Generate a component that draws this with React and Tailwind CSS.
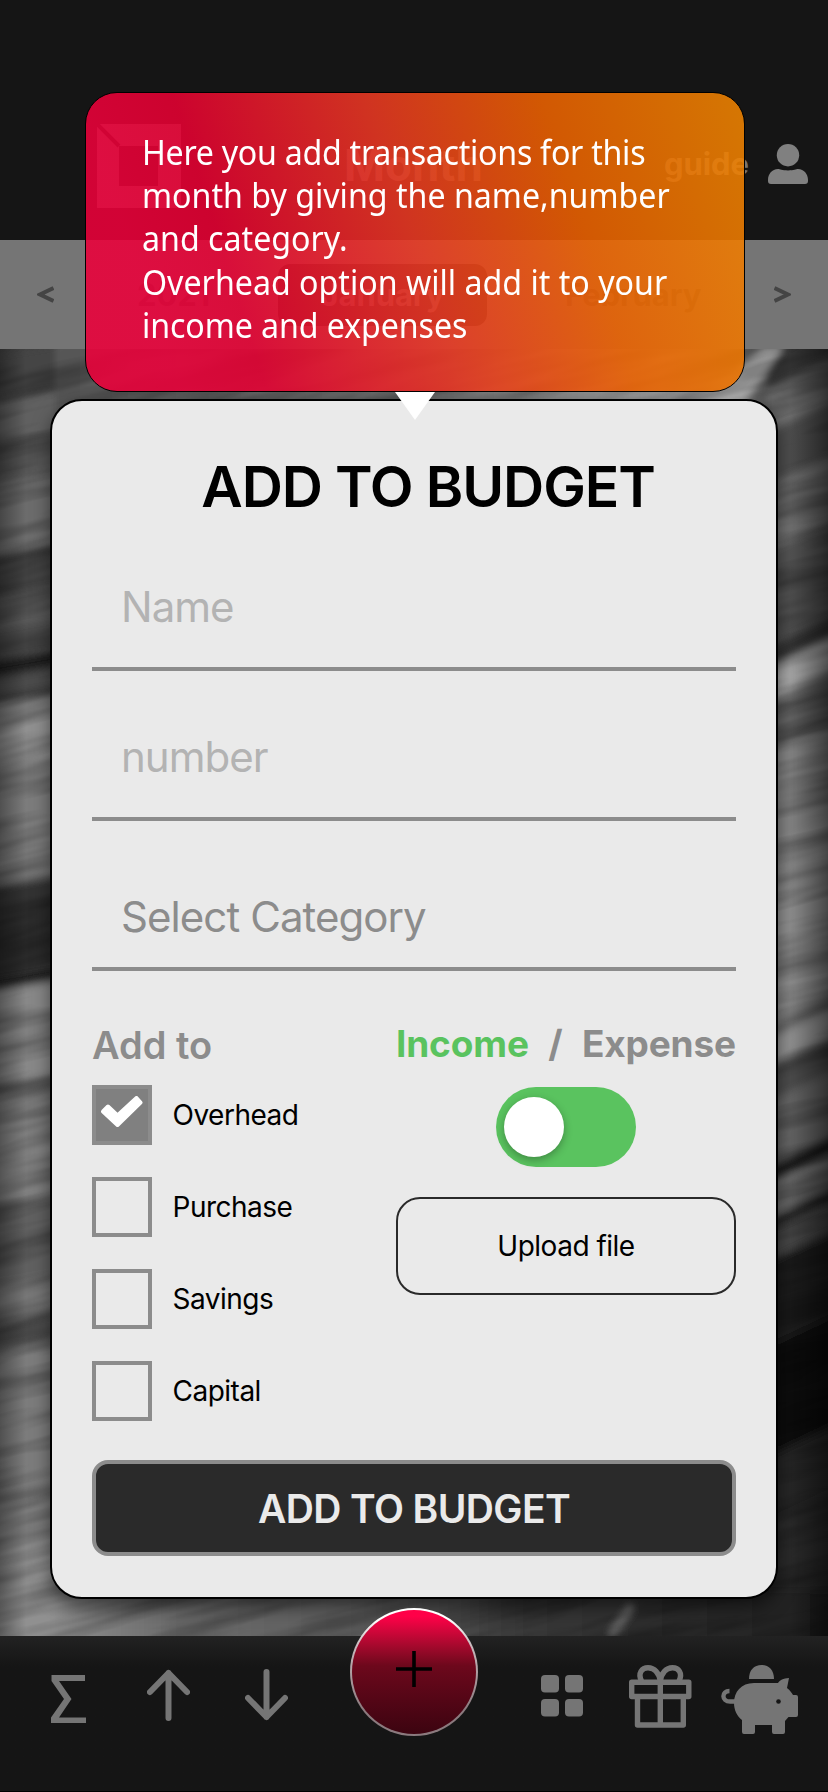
const LEFT_BANDS = [
  [349, 395, '#444'], [395, 440, '#606060'], [440, 475, '#545454'], [475, 550, '#6c6c6c'], [550, 590, '#444'],
  [590, 625, '#5a5a5a'], [625, 655, '#484848'], [655, 672, '#1e1e1e'], [672, 692, '#4c4c4c'], [692, 700, '#2a2a2a'],
  [700, 760, '#909090'], [760, 880, '#7c7c7c'], [880, 975, '#303030'], [975, 985, '#101010'], [985, 1080, '#888'],
  [1080, 1092, '#4c4c4c'], [1092, 1200, '#808080'], [1200, 1280, '#606060'], [1280, 1318, '#7a7a7a'],
  [1318, 1345, '#4c4c4c'], [1345, 1490, '#7c7c7c'], [1490, 1500, '#585858'], [1500, 1560, '#888'], [1560, 1650, '#909090'],
];

const RIGHT_BANDS = [
  [340, 372, '#3a3a3a'], [372, 415, '#707070'], [415, 470, '#4e4e4e'], [470, 535, '#707070'], [535, 630, '#525252'],
  [630, 652, '#303030'], [652, 684, '#aaa'], [684, 700, '#6c6c6c'], [700, 735, '#646464'], [735, 830, '#848484'],
  [830, 1010, '#8e8e8e'], [1010, 1022, '#606060'], [1022, 1050, '#909090'], [1050, 1085, '#4c4c4c'],
  [1085, 1150, '#646464'], [1150, 1168, '#1a1a1a'], [1168, 1202, '#747474'], [1202, 1214, '#121212'],
  [1214, 1245, '#444'], [1245, 1330, '#1e1e1e'], [1330, 1440, '#101010'], [1440, 1500, '#262626'], [1500, 1650, '#2a2a2a'],
];

function Backdrop() {
  return (
    <svg className="absolute inset-0" width="828" height="1792" viewBox="0 0 828 1792" aria-hidden="true">
      <defs>
        <filter id="soft" x="-20%" y="-5%" width="140%" height="110%"><feGaussianBlur stdDeviation="3 4" /></filter>
        <filter id="grain" x="0" y="0" width="100%" height="100%">
          <feTurbulence type="fractalNoise" baseFrequency="0.006 0.045" numOctaves="3" seed="8" />
          <feColorMatrix values="0 0 0 0 0  0 0 0 0 0  0 0 0 0 0  2.6 0 0 0 -1" />
        </filter>
        <linearGradient id="edgeL"><stop offset="0" stopOpacity=".35" /><stop offset="1" stopOpacity="0" /></linearGradient>
        <linearGradient id="edgeR"><stop offset="0" stopOpacity="0" /><stop offset="1" stopOpacity=".5" /></linearGradient>
        <linearGradient id="floor"><stop offset="0" stopColor="#909090" /><stop offset=".15" stopColor="#6c6c6c" /><stop offset=".4" stopColor="#5c5c5c" /><stop offset=".6" stopColor="#383838" /><stop offset="1" stopColor="#1c1c1c" /></linearGradient>
        <linearGradient id="ceiling"><stop offset="0" stopColor="#565656" /><stop offset=".5" stopColor="#6c6c6c" /><stop offset=".85" stopColor="#989898" /><stop offset="1" stopColor="#606060" /></linearGradient>
      </defs>
      <rect width="828" height="1792" fill="#444" />
      <g filter="url(#soft)">
        {LEFT_BANDS.map(([a, b, c]) => <path key={a} fill={c} d={`M-20 ${a + 8} L75 ${a - 8} V${b - 8} L-20 ${b + 8}Z`} />)}
        {RIGHT_BANDS.map(([a, b, c]) => <path key={a} fill={c} d={`M765 ${a + 18} L850 ${a - 22} V${b - 22} L765 ${b + 18}Z`} />)}
        <rect x="55" y="340" width="712" height="80" fill="url(#ceiling)" />
        <rect x="50" y="1590" width="800" height="60" fill="url(#floor)" />
        <path d="M670 412 L735 372 L765 345 L785 345 L740 410Z" fill="#b0b0b0" />
        <path d="M610 1636 L632 1606" stroke="#686868" strokeWidth="7" />
      </g>
      <rect x="0" y="349" width="26" height="1287" fill="url(#edgeL)" />
      <rect x="790" y="349" width="38" height="1287" fill="url(#edgeR)" />
      <g transform="rotate(-14 414 1000)"><rect x="-250" y="100" width="1350" height="1800" filter="url(#grain)" opacity=".26" /></g>
    </svg>
  );
}

function Header() {
  return (
    <header className="relative flex h-60 shrink-0 bg-[#151515] font-[Inter,sans-serif]">
      <svg className="ml-[97px] mt-[124px] shrink-0" width="84" height="84" viewBox="0 0 84 84">
        <path fillRule="evenodd" fill="#757575" d="M0 0H84V84H0Z M22 22V62H61V22Z" />
        <path d="M0 0L22 22" stroke="#151515" strokeWidth="4" />
      </svg>
      <h1 className="ml-[163px] mt-[139px] w-[142px] text-[44px] font-bold leading-[52px] text-[#666]">Month</h1>
      <span className="ml-[178px] mt-[143px] w-[84px] text-[31px] font-bold leading-[42px] tracking-[-0.1px] text-[#757575]">guide</span>
      <svg className="ml-5 mt-36 shrink-0" width="40" height="40" viewBox="0 0 40 40" fill="#808080">
        <circle cx="20" cy="11.2" r="11.2" />
        <path d="M10 25C12 25 14 26.4 20 26.4S28 25 30 25C36 25 40 30 40 36V37Q40 40 37 40H3Q0 40 0 37V36C0 30 4 25 10 25Z" />
      </svg>
    </header>
  );
}

function MonthStrip() {
  return (
    <nav className="relative flex h-[109px] shrink-0 items-center bg-[#757575] font-[Inter,sans-serif] text-[31px] font-bold leading-10 tracking-[-0.1px] text-[#4c4c4c]">
      <svg className="ml-[37px] shrink-0" width="17" height="17" viewBox="0 0 17 17" fill="none" stroke="#444" strokeWidth="4"><path d="M16.5 2L3 8.500L16.5 15" /></svg>
      <span className="ml-[83px] w-[72px]">2021</span>
      <span className="ml-[69px] flex h-[62px] w-[209px] items-center justify-center rounded-xl bg-[#202020] text-[#757575]">January</span>
      <span className="ml-[78px] w-[139px]">February</span>
      <svg className="ml-[70px] shrink-0" width="17" height="17" viewBox="0 0 17 17" fill="none" stroke="#444" strokeWidth="4"><path d="M.5 2L14 8.500L.5 15" /></svg>
    </nav>
  );
}

function TabBar() {
  return (
    <footer className="relative flex h-[156px] shrink-0 border-b border-black bg-[#151515] bg-linear-to-b from-[#222] from-0% to-[#151515] to-20%">
      <svg className="ml-[51px] mt-[39px] shrink-0" width="36" height="48" viewBox="0 0 36 48" fill="#757575"><path d="M0.5 0H34V6H8L20.5 24L8 42.5H35V48H0V42.5L13 24L0.5 6Z" /></svg>
      <svg className="ml-[60px] mt-[33px] shrink-0" width="43" height="52" viewBox="0 0 43 52" fill="none" stroke="#757575" strokeWidth="6" strokeLinecap="round" strokeLinejoin="round"><path d="M21.5 49V4M3 23L21.5 4L40 23" /></svg>
      <svg className="ml-[55px] mt-[33px] shrink-0" width="43" height="52" viewBox="0 0 43 52" fill="none" stroke="#757575" strokeWidth="6" strokeLinecap="round" strokeLinejoin="round"><path d="M21.5 3V48M3 29L21.5 48L40 29" /></svg>
      <button className="ml-[62px] -mt-[28px] flex size-32 shrink-0 items-center justify-center rounded-full bg-linear-to-b from-white from-[8%] via-[#c8b8bc] via-30% to-[#8b7a7e] to-80% p-[2px]">
        <span className="flex size-full items-center justify-center rounded-full bg-linear-to-b from-[#ff0048] from-5% via-[#6d081c] via-45% to-[#3c0410]">
          <svg className="-mt-1.5" width="36" height="36" viewBox="0 0 36 36" stroke="#000" strokeWidth="3.6"><path d="M0 18H36M18 0V36" /></svg>
        </span>
      </button>
      <svg className="ml-[63px] mt-[39px] shrink-0" width="42" height="42" viewBox="0 0 42 42" fill="#757575">
        <rect width="18" height="17.5" rx="4" /><rect x="24" width="18" height="17.5" rx="4" /><rect y="24" width="18" height="17.5" rx="4" /><rect x="24" y="24" width="18" height="17.5" rx="4" />
      </svg>
      <svg className="ml-[46px] mt-[29px] shrink-0" width="63" height="63" viewBox="0 0 63 63" fill="none" stroke="#757575" strokeWidth="5.4" strokeLinejoin="round">
        <path d="M2.7 17.2H59.8V31.5H2.7ZM8.5 31.5V60H54.3V31.5M31.3 17V62" />
        <path d="M12.5 16C8.5 8 13 2.7 19 2.7C25.5 2.7 30 8 31.3 16C32.6 8 37 2.7 43.5 2.7C49.5 2.7 54 8 50 16" />
      </svg>
      <svg className="ml-[29px] mt-[29px] shrink-0" width="78" height="70" viewBox="0 0 78 70" fill="#757575">
        <path d="M28 14C28 5 33 0 40.5 0S53 5 53 14Z" />
        <path d="M33 18H57C59 15 62 13.2 68 13L66 23C69 25.5 71 28 72 30H75Q77 30 77 32V50Q77 52 75 52H67.5L64 56V67Q64 69 62 69H53Q51 69 51 67V60H34V67Q34 69 32 69H23Q21 69 21 67V55C16 51 13 45 13 38C13 27 20 18 33 18Z" />
        <path d="M14 36.5H9C.3 36.5 .3 26 8.5 26" fill="none" stroke="#757575" strokeWidth="4.4" />
        <circle cx="57.5" cy="36.5" r="2.3" fill="#151515" />
      </svg>
    </footer>
  );
}

function Option({ label, checked }) {
  return (
    <label className="flex h-[60px] items-center">
      <span className={checked ? 'flex size-[60px] items-center justify-center border-4 border-[#8c8c8c] bg-[#808080]' : 'size-[60px] border-4 border-[#8c8c8c]'}>
        {checked && (
          <svg className="-mt-1.5" width="42" height="32" viewBox="0 0 42 32" fill="#fff" stroke="#fff" strokeWidth="4" strokeLinejoin="round">
            <path d="M2 15.5L7 10.5L16.5 19.5L35.5 2L39.5 6.5L16.5 29Z" />
          </svg>
        )}
      </span>
      <span className="ml-[20.500px] text-[28px] leading-9 tracking-[-0.5px]">{label}</span>
    </label>
  );
}

function BudgetCard() {
  return (
    <main className="absolute left-[50px] top-[399px] flex h-[1200px] w-[728px] flex-col rounded-[32px] border-2 border-black bg-[#eaeaea] px-10 font-[Inter,sans-serif] text-black shadow-[0_8px_18px_0_rgba(0,0,0,0.5)]">
      <h2 className="ml-7 mt-[51px] h-[69px] text-center text-[57px] font-semibold leading-[70px] tracking-[-1.1px]">ADD TO BUDGET</h2>
      <div className="mt-[51px] h-[99px] border-b-4 border-[#8c8c8c] pl-[29px] pt-[9px] text-[42px] leading-[52px] tracking-[-1px] text-[#b3b3b3]">Name</div>
      <div className="mt-[51px] h-[99px] border-b-4 border-[#8c8c8c] pl-[29px] pt-[9px] text-[42px] leading-[52px] tracking-[-1px] text-[#b3b3b3]">number</div>
      <div className="mt-[51px] h-[99px] border-b-4 border-[#8c8c8c] pl-[29px] pt-[19px] text-[42px] leading-[52px] tracking-[-0.93px] text-[#8c8c8c]">Select Category</div>
      <div className="mt-[51px] flex justify-between">
        <section className="flex flex-col">
          <h3 className="mb-[17px] text-[38px] font-semibold leading-[46px] text-[#8c8c8c]">Add to</h3>
          <div className="flex flex-col gap-8">
            <Option label="Overhead" checked />
            <Option label="Purchase" />
            <Option label="Savings" />
            <Option label="Capital" />
          </div>
        </section>
        <section className="flex w-[340px] flex-col items-center">
          <div className="-mt-px flex w-full justify-between whitespace-nowrap text-[37px] font-bold leading-[46px] tracking-[-0.15px] text-[#8c8c8c]">
            <span className="text-[#5ac35f]">Income</span><span>/</span><span>Expense</span>
          </div>
          <div className="mt-5 flex h-20 w-[140px] items-center rounded-full bg-[#5ac35f] pl-2">
            <span className="size-[60px] rounded-full bg-white shadow-[0_3px_8px_rgba(0,0,0,0.3)]" />
          </div>
          <button className="mt-[30px] h-[98px] w-full rounded-3xl border-2 border-[#2a2a2a] text-[28px] leading-9 tracking-[-0.5px]">Upload file</button>
        </section>
      </div>
      <button className="mt-[39px] h-24 shrink-0 rounded-2xl border-4 border-[#8c8c8c] bg-[#2a2a2a] pt-0.5 text-[39px] font-semibold tracking-[-0.6px] text-[#eaeaea]">ADD TO BUDGET</button>
    </main>
  );
}

function GuideTip() {
  return (
    <aside className="absolute left-[85px] top-[92px] h-[300px] w-[660px] rounded-[32px] border border-black bg-[linear-gradient(72deg,rgba(236,0,58,0.88)_12%,rgba(230,0,50,0.88)_24%,rgba(234,56,34,0.88)_50%,rgba(236,98,0,0.88)_73%,rgba(240,133,0,0.88)_100%)] pl-14 pt-[37px]">
      <p className="w-fit origin-left scale-x-[0.919] whitespace-nowrap font-['Noto_Sans',sans-serif] text-[35px] leading-[43.2px] text-white">
        <span className="block tracking-[-0.3px]">Here you add transactions for this</span>
        <span className="block">month by giving the name,number</span>
        <span className="block">and category.</span>
        <span className="block">Overhead option will add it to your</span>
        <span className="block tracking-[-0.1px]">income and expenses</span>
      </p>
      <svg className="absolute left-[309px] top-[299px]" width="40" height="28" viewBox="0 0 40 28" fill="#fff"><path d="M0 0H40L20 28Z" /></svg>
    </aside>
  );
}

export default function App() {
  return (
    <div className="relative flex h-[1792px] w-[828px] flex-col justify-between overflow-hidden bg-[#151515]">
      <Backdrop />
      <div className="flex flex-col">
        <Header />
        <MonthStrip />
      </div>
      <BudgetCard />
      <TabBar />
      <GuideTip />
    </div>
  );
}
